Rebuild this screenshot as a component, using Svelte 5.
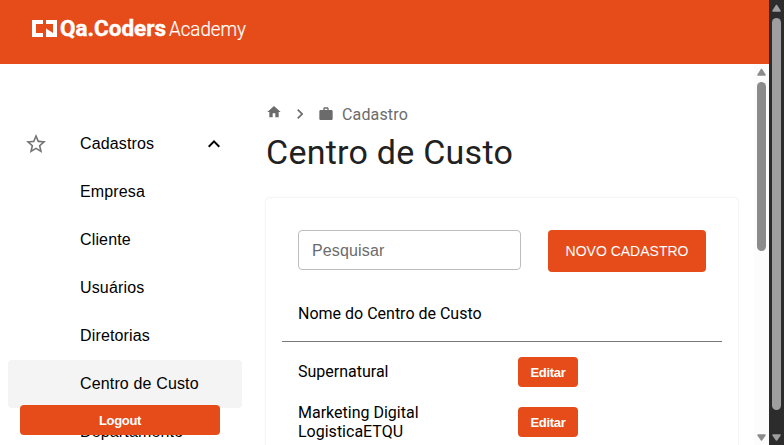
<script>
  const menu = ['Empresa', 'Cliente', 'Usuários', 'Diretorias', 'Centro de Custo', 'Departamento'];
  const rows = [['Supernatural'], ['Marketing Digital', 'LogisticaETQU']];
  const active = 'Centro de Custo';
</script>

{#snippet bar(kind)}
  <div class="scrollbar {kind}">
    <svg width="15" height="16" viewBox="0 0 15 16"><path d="M7.5 5.5 11 11H4z" /></svg>
    <div class="track"><div class="thumb"></div></div>
    <svg width="15" height="16" viewBox="0 0 15 16"><path d="M4 6h7L7.5 11z" /></svg>
  </div>
{/snippet}

<div class="app">
  <div class="page">
    <header>
      <svg class="logo" width="240" height="64" viewBox="0 0 240 64">
        <path d="M0 20h11v4H4v9h7v4H0zM14 20h11v17H14v-8.500l7 4.500v-9h-7z" />
        <text class="brand" x="28" y="36" textLength="106" lengthAdjust="spacingAndGlyphs">Qa.Coders</text>
        <text class="sub" x="137" y="36" textLength="77" lengthAdjust="spacingAndGlyphs">Academy</text>
      </svg>
    </header>
    <div class="content">
      <aside>
        <nav>
          <div class="item">
            <svg class="star" width="24" height="24" viewBox="0 0 24 24"><path d="m22 9.24-7.19-.62L12 2 9.19 8.63 2 9.24l5.46 4.73L5.82 21 12 17.27 18.18 21l-1.63-7.03L22 9.24zM12 15.4l-3.76 2.27 1-4.28-3.32-2.88 4.38-.38L12 6.1l1.71 4.04 4.38.38-3.32 2.88 1 4.28L12 15.4z" /></svg>
            <span>Cadastros</span>
            <svg class="less" width="24" height="24" viewBox="0 0 24 24"><path d="m12 8-6 6 1.41 1.41L12 10.83l4.59 4.58L18 14z" /></svg>
          </div>
          {#each menu as m}
            <div class="item sub" class:active={m === active}><span>{m}</span></div>
          {/each}
        </nav>
        <button class="logout">Logout</button>
      </aside>
      <main>
        <div class="crumbs">
          <svg class="home" width="16" height="16" viewBox="0 0 24 24"><path d="M10 20v-6h4v6h5v-8h3L12 3 2 12h3v8z" /></svg>
          <svg class="next" width="20" height="20" viewBox="0 0 24 24"><path d="M10 6 8.59 7.41 13.17 12l-4.58 4.59L10 18l6-6z" /></svg>
          <svg class="work" width="16" height="16" viewBox="0 0 24 24"><path d="M20 6h-4V4c0-1.11-.89-2-2-2h-4c-1.11 0-2 .89-2 2v2H4c-1.11 0-1.99.89-1.99 2L2 19c0 1.11.89 2 2 2h16c1.11 0 2-.89 2-2V8c0-1.11-.89-2-2-2zm-6 0h-4V4h4v2z" /></svg>
          <span>Cadastro</span>
        </div>
        <h1>Centro de Custo</h1>
        <section class="card">
          <div class="tools">
            <input placeholder="Pesquisar" />
            <button class="new">NOVO CADASTRO</button>
          </div>
          <div class="thead">Nome do Centro de Custo</div>
          {#each rows as lines}
            <div class="row">
              <div class="name">{#each lines as l}<div>{l}</div>{/each}</div>
              <button class="edit">Editar</button>
            </div>
          {/each}
        </section>
      </main>
      {@render bar('inner')}
    </div>
  </div>
  {@render bar('outer')}
</div>

<style>
  :global(body) { margin: 0; overflow: hidden; }
  .app { display: flex; width: 784px; height: 445px; overflow: hidden; background: #fff; font-family: Roboto, sans-serif; font-size: 16px; color: #000; }
  .app :global(*) { box-sizing: border-box; }
  .page { width: 769px; display: flex; flex-direction: column; }
  header { height: 64px; flex: none; background: #e64c1a; padding-left: 32px; }
  .logo { display: block; fill: #fff; }
  .brand { font: 700 22.5px Roboto, sans-serif; stroke: #fff; stroke-width: .4px; }
  text.sub { font: 300 19.5px Roboto, sans-serif; stroke: #fff; stroke-width: .2px; }
  .content { display: flex; height: 381px; }
  aside { width: 250px; flex: none; padding: 56px 8px 0; height: 381px; position: relative; overflow: hidden; }
  .item { display: flex; align-items: center; height: 48px; padding: 0 16px; border-radius: 4px; font-family: "Liberation Sans", Arial, sans-serif; line-height: 24px; letter-spacing: .15px; }
  .item span { flex: 1; }
  .item.sub { padding-left: 72px; }
  nav { width: 234px; }
  .active { background: #f4f4f4; }
  .star { fill: #757575; margin-right: 32px; }
  button { border: 0; padding: 0; border-radius: 4px; background: #e64c1a; color: #fff; font-family: "Liberation Sans", Arial, sans-serif; }
  .logout { position: absolute; left: 20px; top: 341px; width: 200px; height: 30px; font-weight: 700; font-size: 13px; letter-spacing: -.3px; }
  main { flex: 1; padding: 38px 16px 0; overflow: hidden; }
  .crumbs { display: flex; align-items: center; height: 24px; color: #6b6b6b; letter-spacing: .15px; }
  .crumbs svg { fill: #6b6b6b; }
  .home { margin-bottom: 4px; }
  .next { margin: 0 8px; }
  .work { margin-right: 8px; }
  h1 { margin: 5px 0 0; font-size: 34px; line-height: 42px; font-weight: 400; letter-spacing: .25px; color: #212121; }
  .card { margin-top: 25px; width: 472px; height: 300px; padding: 32px 16px 0; border-radius: 4px; box-shadow: 0 0 2px rgba(0,0,0,.16); }
  .tools { display: flex; justify-content: space-between; padding: 0 16px; }
  input { width: 223px; height: 40px; border: 1px solid #bdbdbd; border-radius: 4px; padding: 2px 13px 0; font: 16px "Liberation Sans", Arial, sans-serif; letter-spacing: .15px; background: #fff; }
  input::placeholder { color: #6b6b6b; opacity: 1; }
  .new { width: 158px; height: 42px; font-size: 14px; }
  .thead { height: 70px; padding: 32px 16px 0; line-height: 19px; border-bottom: 1px solid #777; }
  .row { display: flex; align-items: center; justify-content: space-between; height: 50px; padding: 0 144px 0 16px; line-height: 19px; }
  .thead + .row { height: 60px; }
  .thead + .row .name { margin-bottom: 2px; }
  .row + .row { height: 40px; }
  .edit { width: 60px; height: 30px; font-weight: 700; font-size: 13px; letter-spacing: -.3px; }
  .scrollbar { width: 15px; flex: none; display: flex; flex-direction: column; background: #fcfcfc; }
  .scrollbar svg { display: block; fill: #8b8b8b; stroke: #8b8b8b; stroke-width: 1.5; stroke-linejoin: round; flex: none; }
  .track { flex: 1; padding: 2px 3px; }
  .thumb { width: 9px; height: 169px; border-radius: 5px; background: #8b8b8b; }
  .outer { background: #2c2c2c; }
  .outer svg { fill: #9f9f9f; stroke: #9f9f9f; }
  .outer .thumb { height: 392px; background: #9f9f9f; }
</style>
